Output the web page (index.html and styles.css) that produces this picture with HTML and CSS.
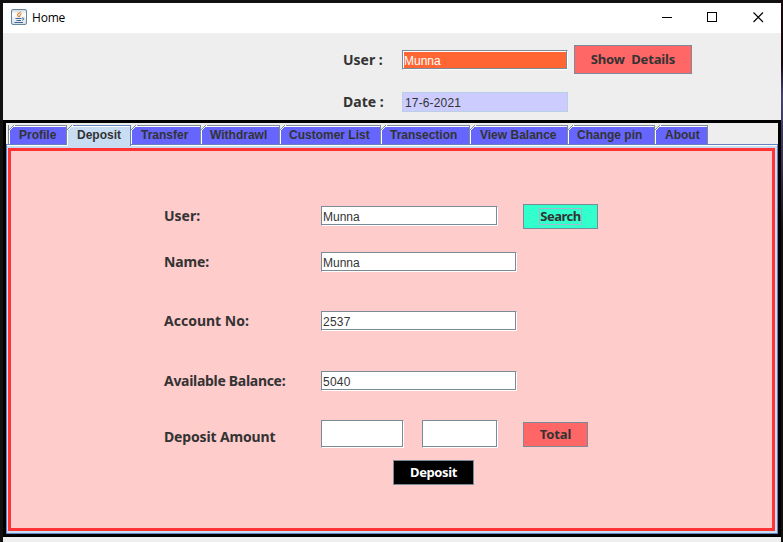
FILE: index.html
```html
<!DOCTYPE html>
<html lang="en">
<head>
<meta charset="utf-8">
<title>Home</title>
<link rel="stylesheet" href="styles.css">
</head>
<body>
<div class="window">
  <header class="titlebar">
    <svg class="java" width="16" height="16" viewBox="0 0 16 16" fill="none">
      <defs><linearGradient id="g" x2="0" y2="1"><stop stop-color="#c9d5de"/><stop offset=".3" stop-color="#fff"/><stop offset="1" stop-color="#d5e0e8"/></linearGradient></defs>
      <rect x=".5" y=".5" width="15" height="15" rx="1.5" fill="url(#g)" stroke="#66879c"/>
      <path d="M9.500 2.500C9.500 4 6 4.700 6.500 6.200Q7 7 8 8M10.500 4.500C8.500 5.500 9.500 6.500 8.500 8" stroke="#e88432" stroke-width="1.200"/>
      <path d="M4.500 9.500H10.500M5.500 11.500H10M3.500 13.500H12" stroke="#426b91"/>
      <path d="M11 9C13.500 8.200 13.500 11 11 11.200" stroke="#426b91"/>
    </svg>
    <span class="title">Home</span>
    <svg class="controls" width="103" height="12" viewBox="0 0 103 12" fill="none" stroke="#000" shape-rendering="crispEdges">
      <path d="M0 6.500H10M45.500 1.500H54.500V10.500H45.500Z"/>
      <path d="M91.500 1.500L101 11M101 1.500L91.500 11" shape-rendering="auto" stroke-width="1.100"/>
    </svg>
  </header>
  <section class="account">
    <div class="row user-row"><label class="label">User :</label><div class="field orange">Munna</div><button class="button red show">Show&nbsp; Details</button></div>
    <div class="row date-row"><label class="label">Date :</label><div class="date">17-6-2021</div></div>
  </section>
  <main class="tabpane">
    <nav class="tabs">
      <span class="tab profile">Profile</span><span class="tab deposit selected">Deposit</span><span class="tab transfer">Transfer</span><span class="tab withdraw">Withdrawl</span><span class="tab customers">Customer List</span><span class="tab transection">Transection</span><span class="tab balance">View Balance</span><span class="tab pin">Change pin</span><span class="tab about">About</span>
    </nav>
    <div class="frame">
      <form class="panel">
        <div class="row r-user"><label class="label l-user">User:</label><div class="field medium">Munna</div><button type="button" class="button search"><span class="focus">Search</span></button></div>
        <div class="row r-name"><label class="label l-name">Name:</label><div class="field wide">Munna</div></div>
        <div class="row r-account"><label class="label l-account">Account No:</label><div class="field wide number">2537</div></div>
        <div class="row r-balance"><label class="label l-balance">Available Balance:</label><div class="field wide number">5040</div></div>
        <div class="row r-amount"><label class="label l-amount">Deposit Amount</label><div class="field amount"></div><div class="field sum"></div><button type="button" class="button red total">Total</button></div>
        <button type="button" class="button submit">Deposit</button>
      </form>
    </div>
  </main>
</div>
</body>
</html>
```
FILE: styles.css
```css
* { box-sizing: border-box; }
body {
  margin: 0;
  width: 783px;
  height: 542px;
  overflow: hidden;
  padding: 3px 2px 0 3px;
  background: linear-gradient(#17090c 0, #160b12 65px, #45436b 95px, #373550 160px, #111 230px) right / 2px 100% no-repeat, #111;
  font: 12px "Liberation Sans", Arial, sans-serif;
  color: #333;
}
.window { height: 539px; background: #eee; }
.titlebar { display: flex; height: 30px; background: #fff; padding-left: 8px; color: #000; }
.java { margin-top: 6px; }
.title { margin-left: 5px; font: 12px/30px "Open Sans", "Noto Sans", sans-serif; letter-spacing: -.2px; }
.controls { margin: 8px 16px 0 auto; }
.account { height: 87px; padding: 12px 0 0 340px; }
.row { display: flex; align-items: flex-start; }
.label { flex: none; font: bold 14px/20px "Noto Sans", "Open Sans", sans-serif; white-space: nowrap; }
.account .label { width: 59px; }
.user-row { height: 47px; }
.user-row .label, .user-row .field { margin-top: 5px; }
.date { width: 166px; height: 20px; border: 1px solid #b8cfe5; background: #ccf; padding-left: 2px; line-height: 20px; letter-spacing: .15px; }
.field {
  flex: none;
  height: 20px;
  border: 1px solid #7a8a99;
  border-right-color: #fff;
  border-bottom-color: #fff;
  box-shadow: inset -1px -1px #7a8a99, inset 1px 1px #fff;
  background: #fff;
  padding-left: 1px;
  line-height: 20px;
}
.number { letter-spacing: .25px; }
.orange { width: 166px; background: #f63; color: #fff; }
.button { border: 1px solid #7a8a99; border-radius: 0; padding: 0 0 2px; font: bold 13px/20px "Noto Sans", "Open Sans", sans-serif; letter-spacing: -.15px; color: #333; white-space: nowrap; }
.red { background: #f66; }
.show { width: 118px; height: 29px; margin-left: 6px; }
.tabpane { height: 417px; border: 3px solid #000; padding-top: 2px; }
.tabs { display: flex; height: 19px; padding-left: 2px; }
.tab { position: relative; flex: none; height: 19px; border-top: 1px solid #7a8a99; border-right: 1px solid #7a8a99; box-shadow: inset 1px 1px #fff; background: #66f; padding-left: 10px; font-weight: bold; line-height: 18px; white-space: nowrap; }
.tab::before { content: ""; position: absolute; left: 0; top: -1px; width: 7px; height: 7px; background: linear-gradient(135deg, #eee 2.9px, #7a8a99 2.9px 3.7px, #fff 3.7px 4.6px, transparent 4.6px); }
.selected { height: 21px; z-index: 1; background: #c8ddf2; border-color: #6382bf; }
.profile { width: 59px; border-left: 1px solid #7a8a99; }
.deposit { width: 64px; }
.transfer { width: 70px; }
.withdraw { width: 79px; padding-left: 9px; }
.customers { width: 101px; padding-left: 9px; }
.transection { width: 89px; padding-left: 9px; }
.balance { width: 98px; }
.pin { width: 87px; padding-left: 9px; }
.about { width: 53px; }
.frame { height: 390px; padding: 3px 2px 2px 1px; border: 1px solid #6382bf; background: #c8ddf2; box-shadow: inset 0 1px #fff; }
.panel { height: 383px; border: 3px solid #f33; background: #fcc; padding: 53px 0 0 153px; }
.panel .label { width: 157px; }
.panel .l-name, .panel .l-amount { letter-spacing: -.15px; }
.panel .l-balance { letter-spacing: -.3px; }
.r-user { height: 48px; }
.r-user .label, .r-user .field { margin-top: 2px; }
.medium { width: 177px; }
.wide { width: 196px; }
.search { width: 75px; height: 25px; margin-left: 25px; background: #3fc; letter-spacing: -.5px; }
.focus { display: inline-block; border: 1px solid #a3b8cc; line-height: 14px; height: 17px; }
.r-name { height: 59px; }
.r-account { height: 60px; }
.r-balance { height: 49px; }
.r-amount { height: 40px; }
.r-amount .label { margin-top: 7px; }
.amount { width: 83px; height: 28px; }
.sum { width: 76px; height: 28px; margin-left: 18px; }
.total { width: 65px; height: 25px; margin: 2px 0 0 25px; }
.submit { display: block; width: 81px; height: 25px; margin-left: 229px; background: #000; color: #fff; letter-spacing: -.4px; }
```
